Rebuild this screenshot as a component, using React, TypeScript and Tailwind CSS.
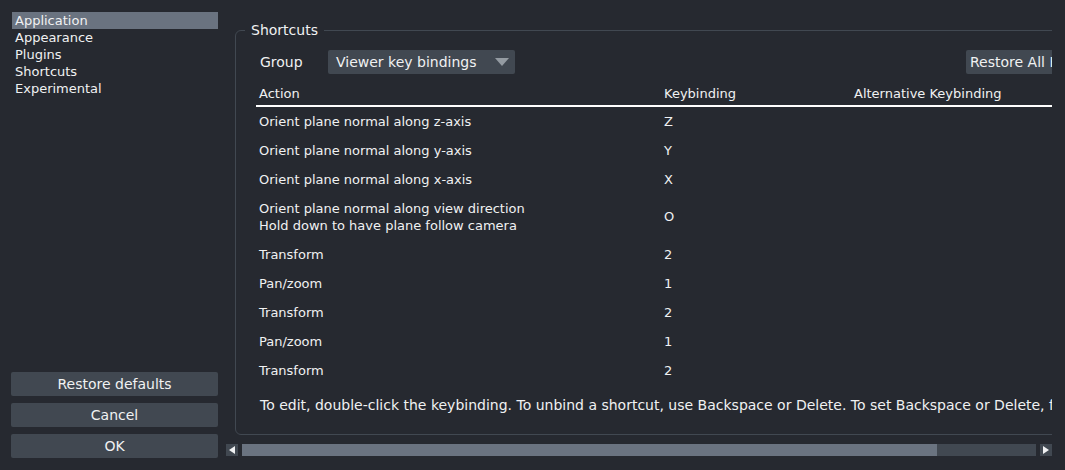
import React from 'react'

const rows: { action: string[]; key: string }[] = [
  { action: ['Orient plane normal along z-axis'], key: 'Z' },
  { action: ['Orient plane normal along y-axis'], key: 'Y' },
  { action: ['Orient plane normal along x-axis'], key: 'X' },
  { action: ['Orient plane normal along view direction', 'Hold down to have plane follow camera'], key: 'O' },
  { action: ['Transform'], key: '2' },
  { action: ['Pan/zoom'], key: '1' },
  { action: ['Transform'], key: '2' },
  { action: ['Pan/zoom'], key: '1' },
  { action: ['Transform'], key: '2' },
]

const pages = ['Application', 'Appearance', 'Plugins', 'Shortcuts', 'Experimental']

export default function App() {
  return (
    <div
      className="w-[1065px] h-[470px] bg-[#262930] text-[#f0f1f2] flex overflow-hidden"
      style={{ fontFamily: '"DejaVu Sans", sans-serif' }}
    >
      {/* sidebar */}
      <div className="w-[226px] shrink-0 flex flex-col pl-[11px] pr-[8px] pt-[12px] pb-[12px]">
        <ul className="flex-1 pl-[1px] text-[13px]">
          {pages.map((p, i) => (
            <li
              key={p}
              className={`h-[17px] leading-[17px] pl-[3px] ${i === 0 ? 'bg-[#6a7380]' : ''}`}
            >
              {p}
            </li>
          ))}
        </ul>
        <div className="flex flex-col gap-[7px] text-[14px]">
          {['Restore defaults', 'Cancel', 'OK'].map((b) => (
            <button key={b} className="h-[24px] bg-[#414851] rounded-[2px] leading-[24px]">
              {b}
            </button>
          ))}
        </div>
      </div>

      {/* content */}
      <div className="w-[826px] shrink-0 flex flex-col pt-[22px] pb-[14px]">
        <div className="flex-1 overflow-hidden">
          <div className="w-[1200px] pl-[9px] h-full">
            <fieldset className="border border-[#414851] rounded-md h-[413px]">
              <legend className="ml-[9px] px-[6px] text-[14px] leading-[17px]">Shortcuts</legend>
              <div className="pl-[20px] pr-[4px]">
                <div className="flex items-center h-[24px] mt-[11px] text-[14px]">
                  <span className="w-[72px] pl-[4px]">Group</span>
                  <div className="w-[187px] h-[24px] bg-[#414851] rounded-[2px] flex items-center pl-[8px] pr-[6px] justify-between">
                    <span>Viewer key bindings</span>
                    <svg width="14" height="9" viewBox="0 0 14 9">
                      <path d="M0 0 L14 0 L7 8 Z" fill="#949ba2" />
                    </svg>
                  </div>
                  <div className="ml-[451px] h-[24px] bg-[#414851] rounded-[2px] px-[4px] leading-[24px] whitespace-nowrap">
                    Restore All Keybindings
                  </div>
                </div>
                <div className="w-[796px] mt-[8px] text-[13px]">
                  <div className="flex h-[25px] items-center border-b-2 border-white">
                    <span className="w-[405px] pl-[3px]">Action</span>
                    <span className="w-[190px] pl-[3px]">Keybinding</span>
                    <span className="pl-[3px]">Alternative Keybinding</span>
                  </div>
                  {rows.map((r, i) => (
                    <div
                      key={i}
                      className={`flex items-center ${r.action.length > 1 ? 'h-[46px]' : 'h-[29px]'}`}
                    >
                      <div className="w-[405px] pl-[3px] leading-[17px]">
                        {r.action.map((a) => (
                          <div key={a}>{a}</div>
                        ))}
                      </div>
                      <div className="w-[190px] pl-[3px]">{r.key}</div>
                    </div>
                  ))}
                </div>
                <div className="mt-[10px] pl-[4px] text-[14px] whitespace-nowrap">
                  To edit, double-click the keybinding. To unbind a shortcut, use Backspace or Delete. To
                  set Backspace or Delete, first unbind.
                </div>
              </div>
            </fieldset>
          </div>
        </div>
        {/* horizontal scrollbar */}
        <div className="h-[12px] flex items-stretch gap-[4px]">
          <div className="w-[12px] bg-[#414851] flex items-center justify-center">
            <svg width="6" height="8" viewBox="0 0 6 8">
              <path d="M6 0 L0 4 L6 8 Z" fill="#f0f1f2" />
            </svg>
          </div>
          <div className="flex-1 bg-[#414851] flex">
            <div className="w-[695px] bg-[#6a7380]" />
          </div>
          <div className="w-[12px] bg-[#414851] flex items-center justify-center">
            <svg width="6" height="8" viewBox="0 0 6 8">
              <path d="M0 0 L6 4 L0 8 Z" fill="#f0f1f2" />
            </svg>
          </div>
        </div>
      </div>
    </div>
  )
}
